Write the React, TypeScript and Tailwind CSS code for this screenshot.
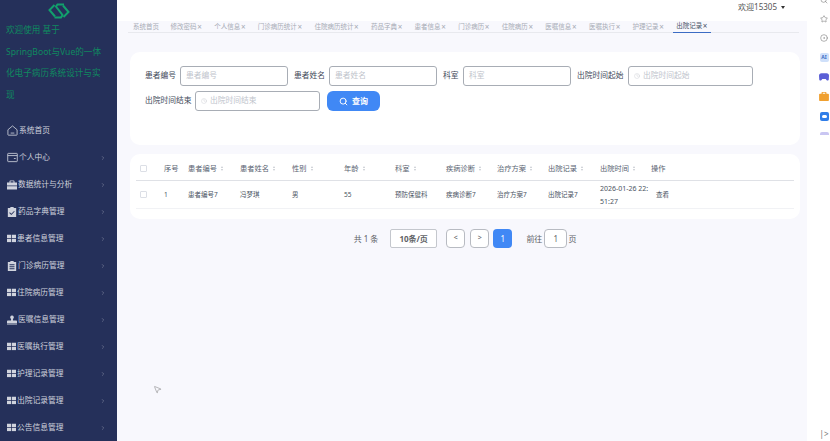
import { ChevronRight, Search, Clock, Star, CircleDot, MousePointer2 } from "lucide-react";
import type { ReactNode } from "react";

const grid = (
  <svg viewBox="0 0 12 10" className="h-[9px] w-[9px] shrink-0" fill="currentColor">
    <rect x="0" y="0" width="5.5" height="4.4" />
    <rect x="6.5" y="0" width="5.5" height="4.4" />
    <rect x="0" y="5.4" width="5.5" height="4.4" />
    <rect x="6.5" y="5.4" width="5.5" height="4.4" />
  </svg>
);

const homeIcon = (
  <svg viewBox="0 0 12 12" className="h-[11px] w-[11px] shrink-0" fill="none" stroke="currentColor" strokeWidth="0.9">
    <path d="M1 5.2 6 1l5 4.2v5.3a.6.6 0 0 1-.6.6H1.6a.6.6 0 0 1-.6-.6z" />
    <path d="M4 8.800h4" />
  </svg>
);

const walletIcon = (
  <svg viewBox="0 0 12 11" className="h-[11px] w-[11px] shrink-0" fill="none" stroke="currentColor" strokeWidth="0.9">
    <rect x="0.8" y="1" width="10.4" height="9" rx="0.6" />
    <path d="M.8 3.400h10.4M7.500 6.600h2" />
  </svg>
);

const caseIcon = (
  <svg viewBox="0 0 12 11" className="h-[10px] w-[10px] shrink-0" fill="currentColor">
    <path d="M4 0h4a1 1 0 0 1 1 1v1.400h3V6H0V2.400h3V1a1 1 0 0 1 1-1zm.2 1v1.400h3.600V1zM0 7h12v4H0z" />
  </svg>
);

const checkIcon = (
  <svg viewBox="0 0 12 12" className="h-[10px] w-[10px] shrink-0" fill="currentColor">
    <path d="M4 0h4v1.200h3V12H1V1.200h3zm-.6 6.400L2.700 7.200l2.500 2.400 4-4.200-.7-.7-3.300 3.400z" />
  </svg>
);

const clipIcon = (
  <svg viewBox="0 0 12 12" className="h-[10px] w-[10px] shrink-0" fill="currentColor">
    <path d="M4 0h4v1.200h3V12H1V1.200h3zM3 4v1h6V4zm0 2.400v1h6v-1zm0 2.400v1h6v-1z" />
  </svg>
);

const stampIcon = (
  <svg viewBox="0 0 12 11" className="h-[10px] w-[10px] shrink-0" fill="currentColor">
    <path d="M6 0a2.200 2.200 0 0 1 1.400 3.900c-.4.400-.4 1.200-.2 2.100H11a1 1 0 0 1 1 1V9H0V7a1 1 0 0 1 1-1h3.800c.2-.9.2-1.700-.2-2.100A2.200 2.200 0 0 1 6 0zM0 9.800h12V11H0z" />
  </svg>
);

const menu: { label: string; icon: ReactNode; arrow?: boolean }[] = [
  { label: "系统首页", icon: homeIcon, arrow: false },
  { label: "个人中心", icon: walletIcon },
  { label: "数据统计与分析", icon: caseIcon },
  { label: "药品字典管理", icon: checkIcon },
  { label: "患者信息管理", icon: grid },
  { label: "门诊病历管理", icon: clipIcon },
  { label: "住院病历管理", icon: grid },
  { label: "医嘱信息管理", icon: stampIcon },
  { label: "医嘱执行管理", icon: grid },
  { label: "护理记录管理", icon: grid },
  { label: "出院记录管理", icon: grid },
  { label: "公告信息管理", icon: grid },
];

const tabs = ["修改密码", "个人信息", "门诊病历统计", "住院病历统计", "药品字典", "患者信息", "门诊病历", "住院病历", "医嘱信息", "医嘱执行", "护理记录"];

const columns = ["患者编号", "患者姓名", "性别", "年龄", "科室", "疾病诊断", "治疗方案", "出院记录", "出院时间"];
const row = ["患者编号7", "冯梦琪", "男", "55", "预防保健科", "疾病诊断7", "治疗方案7", "出院记录7"];

const cols = "grid grid-cols-[28px_24px_52px_52px_52px_51px_51px_51px_51px_52px_51px_1fr]";

function Sort() {
  return (
    <span className="ml-[4px] inline-flex flex-col gap-[1px] align-middle">
      <span className="h-0 w-0 border-x-[1.5px] border-b-[2px] border-x-transparent border-b-[#c4c7ce]" />
      <span className="h-0 w-0 border-x-[1.5px] border-t-[2px] border-x-transparent border-t-[#c4c7ce]" />
    </span>
  );
}

function Box() {
  return <span className="block h-[7px] w-[7px] rounded-[1px] border border-[#dcdfe6] bg-white" />;
}

function Field({ label, width, clock, labelWidth }: { label: string; width: string; clock?: boolean; labelWidth: string }) {
  return (
    <div className="flex items-center">
      <span className={`${labelWidth} whitespace-nowrap text-[7.75px] text-[#3f4a5a]`}>{label}</span>
      <div className={`${width} flex h-[20px] items-center whitespace-nowrap rounded-[3px] border border-[#a8adb5] bg-white px-[5px] text-[7.75px] text-[#c0c4cc]`}>
        {clock && <Clock className="mr-[3px] h-[6px] w-[6px]" strokeWidth={1.5} />}
        {label}
      </div>
    </div>
  );
}

export default function App() {
  return (
    <div className="flex h-[441px] w-[830px] overflow-hidden bg-white font-['Noto_Sans','Noto_Sans_CJK_SC',sans-serif]">
      <aside className="flex w-[117px] shrink-0 flex-col overflow-hidden bg-[#25305a] text-[#d0d3dd]">
        <div className="flex h-[23px] justify-center pt-[2px]">
          <svg viewBox="0 0 22 18" className="h-[18px] w-[22px]" fill="none" stroke="#12a06c" strokeWidth="2">
            <path d="M16 2.500H9.500L8 4.500l6.500 8.500-1.500 2.500H6.500" />
            <path d="M6.500 3 1.500 8l5.500 6.500" />
            <path d="M15.500 15l5-5L15 3.500" />
          </svg>
        </div>
        <div className="whitespace-nowrap px-[6px] text-[8.6px] leading-[21.5px] text-[#0f8a60]">
          欢迎使用 基于
          <br />
          SpringBoot与Vue的一体
          <br />
          化电子病历系统设计与实
          <br />
          现
        </div>
        <nav className="mt-[11px]">
          {menu.map((m) => (
            <div key={m.label} className="flex h-[27px] items-center pl-[7px] pr-[11px] text-[7.75px]">
              {m.icon}
              <span className="ml-[1px] flex-1 whitespace-nowrap">{m.label}</span>
              {m.arrow !== false && <ChevronRight className="h-[6px] w-[6px] text-[#8c93a8]" strokeWidth={2} />}
            </div>
          ))}
        </nav>
      </aside>

      <main className="flex w-[690px] shrink-0 flex-col bg-[#f8f8fd]">
        <header className="flex h-[21px] items-start justify-end bg-white pr-[22px] pt-[1px] text-[8px] text-[#555]">
          欢迎15305
          <span className="ml-[4px] mt-[5px] h-0 w-0 border-x-[2px] border-t-[3px] border-x-transparent border-t-[#333]" />
        </header>

        <div className="ml-[11px] mr-[8px] flex h-[12px] items-center gap-[11.6px] border-b border-[#e8e9ee] pl-[5px] text-[6.5px] text-[#a7abb5]">
          <span>系统首页</span>
          {tabs.map((t) => (
            <span key={t} className="flex items-center whitespace-nowrap">
              {t}
              <span className="w-[6px] text-center text-[8px] leading-[8px]">×</span>
            </span>
          ))}
          <span className="-mx-[3px] flex h-[12px] items-center whitespace-nowrap border-b border-[#3b6cc4] px-[3px] text-[#4a5568]">
            出院记录
            <span className="w-[6px] text-center text-[8px] leading-[8px]">×</span>
          </span>
        </div>

        <section className="ml-[13px] mr-[7px] mt-[19px] h-[93px] rounded-[10px] bg-white pl-[15px] pt-[14px]">
          <div className="flex gap-[6px]">
            <Field label="患者编号" labelWidth="w-[35px]" width="w-[108px]" />
            <Field label="患者姓名" labelWidth="w-[35px]" width="w-[108px]" />
            <Field label="科室" labelWidth="w-[20px]" width="w-[108px]" />
            <Field label="出院时间起始" labelWidth="w-[51px]" width="w-[125px]" clock />
          </div>
          <div className="mt-[5px] flex items-center gap-[7px]">
            <Field label="出院时间结束" labelWidth="w-[50px]" width="w-[125px]" clock />
            <button className="flex h-[20px] w-[53px] items-center justify-center gap-[4px] rounded-[6px] bg-[#4088f5] text-[8px] font-bold text-white">
              <Search className="h-[9px] w-[9px]" strokeWidth={2.5} />
              查询
            </button>
          </div>
        </section>

        <section className="ml-[13px] mr-[7px] mt-[9px] h-[65px] rounded-[10px] bg-white px-[6px]">
          <div className={`${cols} h-[27px] items-center border-b border-[#dfe1e6] pt-[2px] text-[7.25px] text-[#5a6472]`}>
            <div className="pl-[4px]"><Box /></div>
            <span>序号</span>
            {columns.map((c) => (
              <span key={c} className="whitespace-nowrap">
                {c}
                <Sort />
              </span>
            ))}
            <span>操作</span>
          </div>
          <div className={`${cols} h-[28px] items-center border-b border-[#f1f2f5] text-[6.5px] text-[#4a5362]`}>
            <div className="pl-[4px]"><Box /></div>
            <span>1</span>
            {row.map((c) => (
              <span key={c} className="whitespace-nowrap">
                {c}
              </span>
            ))}
            <span className="whitespace-nowrap text-[7px] leading-[13px]">
              2026-01-26 22:
              <br />
              51:27
            </span>
            <span className="pl-[5px]">查看</span>
          </div>
        </section>

        <div className="mt-[10px] flex items-center justify-center pl-[6px] text-[8px] text-[#606266]">
          <span className="mr-[12px]">共 1 条</span>
          <span className="mr-[9px] flex h-[19px] w-[47px] items-center rounded-[2px] border border-[#c4c7cd] bg-white pl-[8px] font-bold">10条/页</span>
          <span className="mr-[5px] flex h-[19px] w-[19px] items-center justify-center rounded-[4px] border border-[#b8bbc2] bg-white text-[7px]">&lt;</span>
          <span className="mr-[4px] flex h-[19px] w-[19px] items-center justify-center rounded-[4px] border border-[#b8bbc2] bg-white text-[7px]">&gt;</span>
          <span className="mr-[14px] flex h-[19px] w-[19px] items-center justify-center rounded-[4px] bg-[#4088f5] text-white">1</span>
          <span className="mr-[1px]">前往</span>
          <span className="mx-[1px] flex h-[19px] w-[23px] items-center justify-center rounded-[4px] border border-[#b8bbc2] bg-white">1</span>
          <span>页</span>
        </div>

        <div className="relative flex-1">
          <MousePointer2 className="absolute left-[36px] top-[137px] h-[9px] w-[9px] text-[#666]" strokeWidth={1.2} />
        </div>
      </main>

      <aside className="flex flex-1 flex-col items-center gap-[11px] overflow-hidden bg-white pl-[11px]">
        <Search className="-mt-[4px] h-[8px] w-[8px] shrink-0 text-[#666]" strokeWidth={1.5} />
        <Star className="h-[8px] w-[8px] shrink-0 text-[#666]" strokeWidth={1.5} />
        <CircleDot className="h-[8px] w-[8px] shrink-0 text-[#666]" strokeWidth={1.5} />
        <span className="flex h-[9px] w-[9px] shrink-0 items-center justify-center rounded-[2px] bg-[#cfe0fa] text-[5px] font-bold text-[#3b6cc4]">AI</span>
        <svg viewBox="0 0 12 9" className="h-[8px] w-[10px] shrink-0" fill="#5b5fd6">
          <path d="M3 0h6a3 3 0 0 1 3 3l-.3 4.500c-.1 1.300-1.600 1.800-2.500.8L8 7H4L2.800 8.300C1.900 9.300.4 8.800.3 7.500L0 3a3 3 0 0 1 3-3z" />
        </svg>
        <svg viewBox="0 0 12 11" className="h-[9px] w-[10px] shrink-0" fill="#f0a030">
          <path d="M4 0h4a1 1 0 0 1 1 1v1h2a1 1 0 0 1 1 1v7a1 1 0 0 1-1 1H1a1 1 0 0 1-1-1V3a1 1 0 0 1 1-1h2V1a1 1 0 0 1 1-1zm.5 1v1h3V1z" />
        </svg>
        <span className="flex h-[9px] w-[9px] shrink-0 items-center justify-center rounded-[2px] bg-[#2f7de8]">
          <span className="h-[3px] w-[5px] rounded-full bg-white" />
        </span>
        <span className="h-[3px] w-[9px] shrink-0 rounded-t-[2px] bg-[#c9c6f2]" />
        <span className="mb-[2px] mt-auto text-[8px] leading-[10px] text-[#777]">|&gt;</span>
      </aside>
    </div>
  );
}
